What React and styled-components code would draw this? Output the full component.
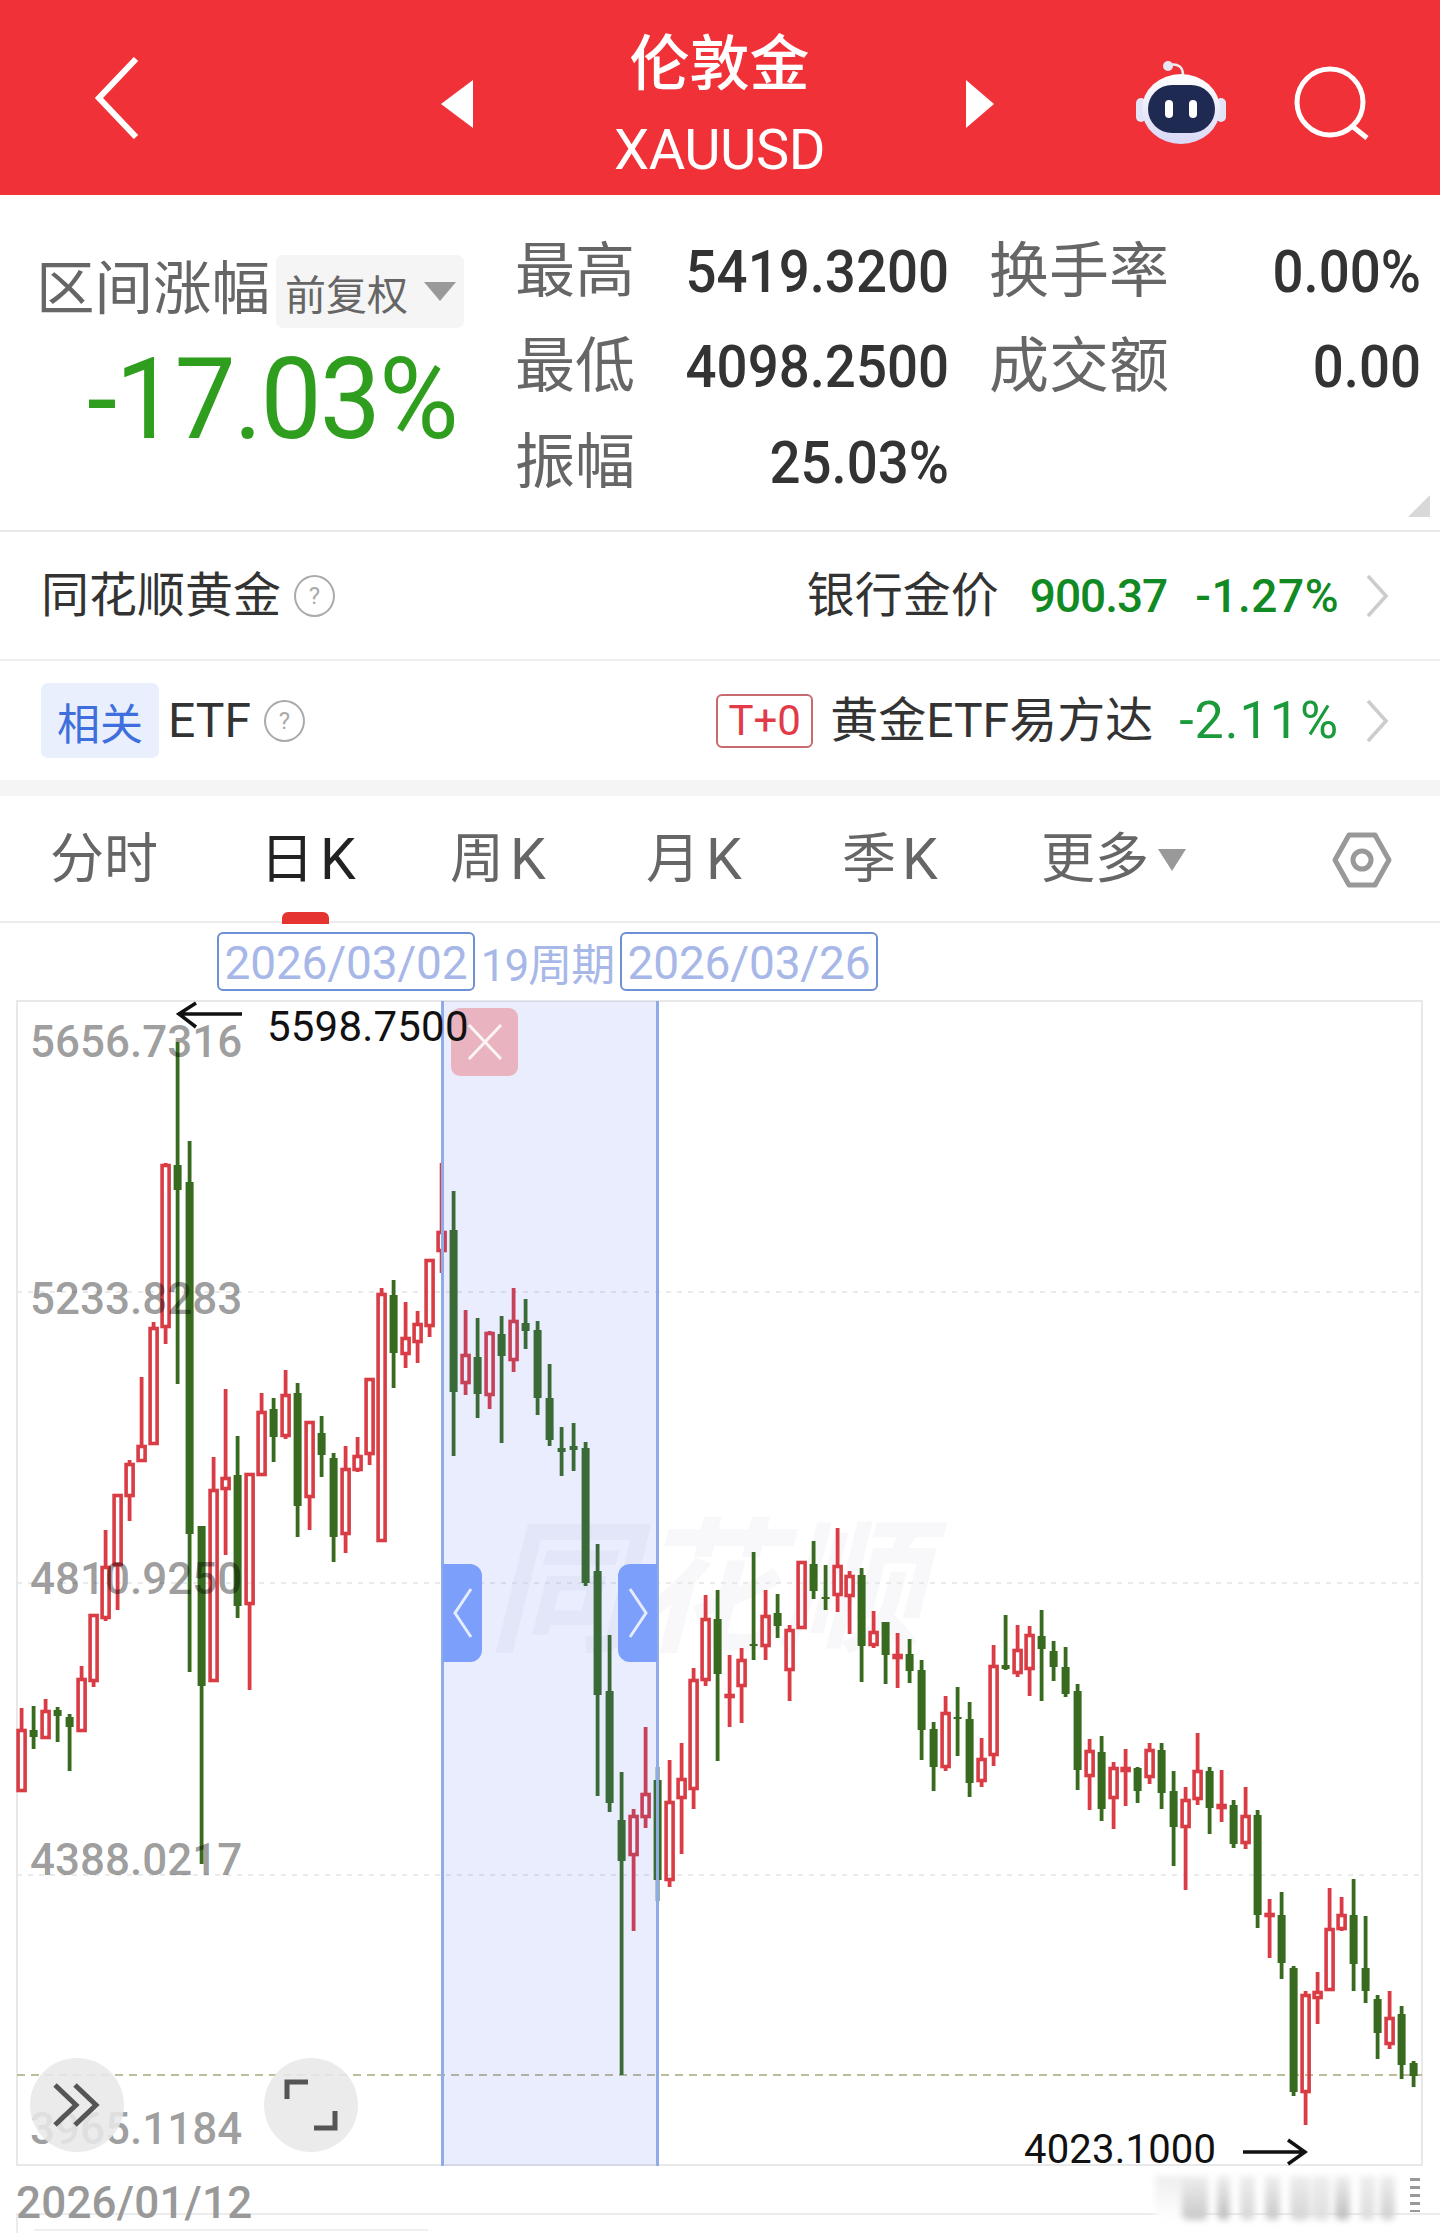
import React from "react";
import styled, { createGlobalStyle } from "styled-components";

const Global = createGlobalStyle`
  html, body { margin: 0; padding: 0; background: #fff; }
  body { font-family: Roboto, "Noto Sans CJK SC", sans-serif; color: #333; }
  * { box-sizing: border-box; }
`;

// [colour, high, body top, body bottom, low] in page pixels
const CANDLES = [
  ["r",1708,1729,1792,1792],["g",1706,1730,1737,1749],["r",1699,1710,1739,1739],["g",1707,1710,1716,1742],
  ["g",1714,1717,1727,1771],["r",1666,1678,1732,1732],["r",1614,1614,1682,1687],["r",1530,1566,1619,1621],
  ["r",1494,1494,1566,1610],["r",1460,1463,1497,1521],["r",1377,1445,1462,1462],["r",1322,1327,1445,1445],
  ["r",1163,1164,1328,1344],["g",1042,1165,1190,1384],["g",1141,1182,1534,1672],["g",1526,1526,1686,1864],
  ["r",1457,1489,1682,1682],["r",1389,1477,1490,1555],["g",1436,1475,1606,1618],["r",1473,1473,1605,1690],
  ["r",1393,1411,1476,1476],["g",1398,1409,1437,1462],["r",1370,1394,1437,1439],["g",1383,1393,1506,1537],
  ["r",1421,1421,1498,1530],["g",1416,1433,1455,1477],["g",1453,1458,1537,1562],["r",1446,1468,1535,1553],
  ["r",1437,1455,1471,1472],["r",1378,1378,1455,1465],["r",1288,1293,1542,1542],["g",1280,1295,1353,1388],
  ["r",1302,1337,1355,1368],["r",1311,1323,1343,1363],["r",1259,1259,1327,1337],["r",1163,1231,1252,1273],
  ["g",1191,1230,1392,1456],["r",1310,1354,1384,1395],["g",1318,1357,1394,1418],["r",1331,1332,1396,1409],
  ["g",1316,1334,1356,1443],["r",1288,1320,1361,1372],["g",1299,1323,1331,1349],["g",1321,1330,1398,1415],
  ["g",1364,1398,1440,1446],["g",1427,1448,1452,1476],["g",1423,1446,1450,1471],["g",1442,1448,1583,1586],
  ["g",1544,1571,1695,1796],["g",1635,1691,1803,1812],["g",1772,1820,1861,2075],["r",1809,1815,1856,1931],
  ["r",1727,1793,1818,1828],["g",1767,1780,1880,1901],["r",1760,1801,1881,1887],["r",1743,1778,1799,1854],
  ["r",1668,1679,1790,1809],["r",1595,1618,1681,1686],["g",1590,1619,1674,1761],["r",1655,1694,1697,1727],
  ["r",1648,1659,1687,1723],["g",1552,1644,1646,1660],["r",1590,1615,1647,1660],["g",1594,1613,1626,1638],
  ["r",1625,1629,1671,1701],["r",1561,1561,1629,1629],["g",1541,1564,1591,1599],["g",1565,1597,1599,1610],
  ["r",1528,1565,1596,1612],["r",1571,1575,1597,1634],["g",1568,1575,1646,1682],["r",1611,1631,1646,1648],
  ["g",1622,1622,1655,1684],["r",1633,1654,1659,1688],["g",1639,1654,1671,1683],["g",1660,1670,1730,1760],
  ["g",1722,1729,1767,1791],["r",1696,1712,1768,1771],["g",1687,1717,1719,1756],["g",1702,1719,1783,1797],
  ["r",1738,1758,1782,1787],["r",1645,1665,1756,1766],["g",1615,1665,1669,1670],["r",1625,1649,1674,1677],
  ["r",1626,1634,1670,1696],["g",1610,1636,1649,1701],["g",1641,1651,1667,1681],["g",1647,1667,1694,1697],
  ["g",1684,1691,1770,1790],["r",1739,1750,1777,1810],["g",1736,1752,1809,1821],["r",1762,1767,1799,1829],
  ["r",1749,1767,1772,1806],["g",1767,1768,1791,1803],["r",1743,1749,1778,1784],["g",1743,1750,1793,1809],
  ["g",1771,1791,1827,1866],["r",1787,1799,1828,1890],["r",1733,1770,1800,1805],["g",1767,1771,1808,1834],
  ["r",1770,1804,1809,1822],["g",1800,1805,1844,1848],["r",1787,1815,1844,1849],["g",1810,1815,1915,1928],
  ["r",1899,1913,1916,1958],["g",1892,1915,1963,1979],["g",1966,1968,2092,2096],["r",1991,1994,2093,2125],
  ["r",1972,1991,1999,2024],["r",1888,1928,1991,1991],["r",1897,1914,1930,1931],["g",1879,1915,1964,1991],
  ["g",1916,1968,1991,2003],["g",1995,1999,2033,2059],["r",1991,2017,2045,2049],["g",2006,2014,2065,2079],
  ["g",2061,2063,2076,2087],
];

const RED = "#d93c45";
const GREEN = "#386a1f";

const Page = styled.div`
  width: 1440px;
  height: 2233px;
  overflow: hidden;
  background: #fff;
`;

/* header */
const Header = styled.header`
  height: 195px;
  background: #f03238;
  color: #fff;
  display: grid;
  grid-template-columns: 441px 32px 493px 28px 1fr;
  align-items: center;
`;
const BackWrap = styled.div`
  padding-left: 95px;
  display: flex;
`;
const TitleBlock = styled.div`
  display: flex;
  flex-direction: column;
  align-items: center;
  align-self: start;
  padding-top: 33px;
`;
const Title = styled.div`
  font-size: 60px;
  line-height: 64px;
  font-weight: 500;
`;
const Code = styled.div`
  font-size: 56px;
  line-height: 56px;
  margin-top: 25px;
  letter-spacing: -0.5px;
`;
const Arrow = styled.div`
  width: 0;
  height: 0;
  border-top: 24px solid transparent;
  border-bottom: 24px solid transparent;
  ${(p) => (p.$left ? "border-right: 32px solid #fff;" : "border-left: 28px solid #fff;")}
  margin-top: 12px;
`;
const HeaderRight = styled.div`
  display: flex;
  align-items: center;
  padding-left: 142px;
  gap: 68px;
  margin-top: 10px;
`;

/* summary */
const Summary = styled.section`
  position: relative;
  height: 337px;
  display: flex;
  border-bottom: 2px solid #e9e9e9;
`;
const SummaryLeft = styled.div`
  width: 515px;
  padding: 58px 0 0 36px;
`;
const RangeRow = styled.div`
  display: flex;
  align-items: center;
  gap: 6px;
`;
const RangeLabel = styled.div`
  font-size: 58.5px;
  line-height: 72px;
  color: #666;
  margin-bottom: 5px;
`;
const AdjustPill = styled.div`
  width: 188px;
  height: 73px;
  border-radius: 7px;
  background: #f5f5f5;
  display: flex;
  align-items: center;
  padding-left: 9px;
  gap: 16px;
  font-size: 41px;
  color: #666;
`;
const TriDown = styled.div`
  width: 0;
  height: 0;
  border-left: ${(p) => p.$w / 2}px solid transparent;
  border-right: ${(p) => p.$w / 2}px solid transparent;
  border-top: ${(p) => p.$h}px solid #999;
`;
const RangeValue = styled.div`
  font-size: 114px;
  line-height: 114px;
  margin: 12px 0 0 51px;
  color: #2f9e1e;
  letter-spacing: -2px;
  transform: scaleX(0.955);
  transform-origin: left;
  white-space: nowrap;
`;
const StatsGrid = styled.div`
  display: grid;
  grid-template-columns: 115px 319px 214px 258px;
  grid-auto-rows: 95.5px;
  padding-top: 29px;
  align-items: center;
`;
const StatLabel = styled.div`
  font-size: 60px;
  line-height: 66px;
  color: #666;
  white-space: nowrap;
  ${(p) => p.$second && "margin-left: 40px;"}
`;
const StatValue = styled.div`
  text-align: right;
  font-size: 60px;
  line-height: 66px;
  font-weight: 500;
  color: #333;
  transform: scaleX(0.91);
  transform-origin: right;
  white-space: nowrap;
`;
const CornerMark = styled.div`
  position: absolute;
  right: 10px;
  bottom: 13px;
  width: 0;
  height: 0;
  border-left: 22px solid transparent;
  border-bottom: 22px solid #d8d8d8;
`;

/* list rows */
const ListRow = styled.div`
  height: ${(p) => p.$h}px;
  display: flex;
  align-items: center;
  justify-content: space-between;
  padding: 0 52px 0 ${(p) => p.$pl}px;
  border-bottom: ${(p) => (p.$line ? "2px solid #efefef" : "none")};
`;
const RowSide = styled.div`
  display: flex;
  align-items: center;
`;
const RowText = styled.div`
  font-size: 48px;
  line-height: 60px;
  color: #333;
  white-space: nowrap;
  margin: ${(p) => p.$m || "0"};
`;
const Help = styled.div`
  width: 41px;
  height: 42px;
  border-radius: 50%;
  border: 2px solid #aaa;
  color: #aaa;
  font-size: 24px;
  display: flex;
  align-items: center;
  justify-content: center;
  margin-left: 13px;
`;
const Quote = styled.div`
  font-size: ${(p) => p.$size || 46}px;
  font-weight: ${(p) => p.$weight || 500};
  line-height: 60px;
  color: ${(p) => p.$color || "#118a24"};
  margin-left: ${(p) => p.$ml}px;
  letter-spacing: ${(p) => p.$ls || 0}px;
  white-space: nowrap;
`;
const Related = styled.div`
  width: 118px;
  height: 75px;
  border-radius: 7px;
  background: #e9effd;
  color: #3f6fdc;
  font-size: 43px;
  display: flex;
  align-items: center;
  justify-content: center;
`;
const TagBox = styled.div`
  width: 97px;
  height: 54px;
  border: 2px solid #c96a6e;
  border-radius: 6px;
  color: #e23a46;
  font-size: 42px;
  display: flex;
  align-items: center;
  justify-content: center;
`;
const ChevronWrap = styled.div`
  display: flex;
  margin-left: 27px;
`;
const GreyBand = styled.div`
  height: 16px;
  background: #f5f5f5;
`;

/* period tabs */
const Tabs = styled.nav`
  height: 127px;
  display: grid;
  grid-template-columns: 210px 190px 196px 196px 199px 150px 1fr;
  align-items: center;
  padding: 2px 48px 0 50px;
  border-bottom: 2px solid #ececec;
`;
const Tab = styled.div`
  position: relative;
  height: 64px;
  font-size: 54px;
  line-height: 64px;
  color: ${(p) => (p.$active ? "#222" : "#666")};
  display: flex;
  align-items: center;
  white-space: nowrap;
  ${(p) =>
    p.$active &&
    `&::after {
      content: "";
      position: absolute;
      left: 22px;
      bottom: -32px;
      width: 47px;
      height: 12px;
      border-radius: 6px 6px 0 0;
      background: #e5332f;
    }`}
`;
const KLetter = styled.span`
  font-size: 57px;
  margin-left: 6px;
`;
const MoreTri = styled.span`
  display: block;
  margin-left: 9px;
  width: 0;
  height: 0;
  border-left: 14px solid transparent;
  border-right: 14px solid transparent;
  border-top: 22px solid #999;
`;
const SettingsWrap = styled.div`
  justify-self: end;
  display: flex;
`;

/* selected range row */
const RangeBar = styled.div`
  height: 77px;
  display: flex;
  align-items: center;
  padding-left: 217px;
  color: #a7b8e8;
  font-size: 46px;
`;
const DateBox = styled.div`
  width: 258px;
  height: 59px;
  border: 2px solid #6d90d2;
  border-radius: 6px;
  display: flex;
  align-items: center;
  justify-content: center;
  padding-top: 2px;
  letter-spacing: -0.2px;
`;
const Periods = styled.div`
  width: 145px;
  text-align: center;
  white-space: nowrap;
  font-size: 44px;
  letter-spacing: -1px;
`;

/* chart */
const Chart = styled.div`
  position: relative;
  width: 1407px;
  height: 1166px;
  margin-left: 16px;
`;
const Watermark = styled.div`
  position: absolute;
  left: 472px;
  top: 510px;
  font-size: 145px;
  line-height: 160px;
  font-weight: 700;
  font-style: italic;
  color: #f8f8fa;
  white-space: nowrap;
`;
const ChartSvg = styled.svg`
  position: absolute;
  inset: 0;
`;
const PriceLabel = styled.div`
  position: absolute;
  left: 14px;
  top: ${(p) => p.$top}px;
  font-size: 44px;
  line-height: 44px;
  font-weight: 500;
  color: rgba(0, 0, 0, 0.4);
`;
const Mark = styled.div`
  position: absolute;
  left: ${(p) => p.$left}px;
  top: ${(p) => p.$top}px;
  font-size: ${(p) => p.$size}px;
  line-height: 40px;
  color: #111;
  letter-spacing: 0.2px;
`;
const MarkArrow = styled.svg`
  position: absolute;
  left: ${(p) => p.$left}px;
  top: ${(p) => p.$top}px;
`;
const Band = styled.div`
  position: absolute;
  left: 425px;
  top: 1px;
  width: 218px;
  height: 1165px;
  background: rgba(70, 110, 240, 0.12);
  border-left: 3px solid #8fabe8;
  border-right: 3px solid #8fabe8;
`;
const Close = styled.div`
  position: absolute;
  left: 7px;
  top: 7px;
  width: 67px;
  height: 68px;
  border-radius: 9px;
  background: #e9b4bf;
  display: flex;
  align-items: center;
  justify-content: center;
`;
const Handle = styled.div`
  position: absolute;
  top: 563px;
  ${(p) => (p.$right ? "right: -1px;" : "left: -1px;")}
  width: 39px;
  height: 98px;
  background: #7b9ffb;
  border-radius: ${(p) => (p.$right ? "12px 0 0 12px" : "0 12px 12px 0")};
  display: flex;
  align-items: center;
  justify-content: center;
`;
const RoundButton = styled.div`
  position: absolute;
  left: ${(p) => p.$left}px;
  top: 1058px;
  width: 94px;
  height: 94px;
  border-radius: 50%;
  background: rgba(232, 232, 232, 0.88);
  display: flex;
  align-items: center;
  justify-content: center;
`;

/* footer strip */
const AxisRow = styled.div`
  height: 49px;
  margin-left: 16px;
  border-bottom: 2px solid #ececec;
  font-size: 44px;
  line-height: 46px;
  font-weight: 500;
  color: #999;
  position: relative;
`;
const StartDate = styled.div`
  position: absolute;
  top: 14px;
  left: 0;
  letter-spacing: 0.2px;
`;
const Blurred = styled.div`
  position: absolute;
  left: 1139px;
  top: 10px;
  display: flex;
  filter: blur(3px);
`;
const BlurBar = styled.div`
  width: ${(p) => p.$w}px;
  height: 44px;
  margin-right: ${(p) => p.$gap}px;
  background: linear-gradient(180deg, #eee, ${(p) => p.$c});
  border-radius: 0 0 6px 6px;
`;
const TinyStack = styled.div`
  position: absolute;
  left: 1394px;
  top: 12px;
  width: 10px;
  height: 34px;
  background: repeating-linear-gradient(180deg, #999 0 3px, transparent 3px 8px);
`;
const Tail = styled.div`
  margin: 0 0 0 16px;
  height: 18px;
  border-left: 2px solid #ececec;
  padding: 14px 0 0 16px;
`;
const TailLine = styled.div`
  width: 394px;
  height: 2px;
  background: #efefef;
`;

const Candle = ({ c, i }) => {
  const [kind, high, top, bot, low] = c;
  const x = 21.6 + i * 12;
  const col = kind === "r" ? RED : GREEN;
  return (
    <g>
      <line x1={x} x2={x} y1={high} y2={top} stroke={col} strokeWidth="3.8" />
      <line x1={x} x2={x} y1={bot} y2={low} stroke={col} strokeWidth="3.8" />
      {kind === "r" ? (
        <rect x={x - 3.5} y={top + 1.5} width="7" height={Math.max(bot - top - 3, 1)} fill="none" stroke={col} strokeWidth="3.6" />
      ) : (
        <rect x={x - 4} y={top} width="8" height={Math.max(bot - top, 2)} fill={col} />
      )}
    </g>
  );
};

const Chevron = () => (
  <svg width="22" height="44" viewBox="0 0 22 44">
    <path d="M2 2 L20 22 L2 42" fill="none" stroke="#ccc" strokeWidth="3.5" />
  </svg>
);

const Robot = () => (
  <svg width="90" height="83" viewBox="0 0 90 83">
    <defs>
      <linearGradient id="shell" x1="0" y1="0" x2="0" y2="1">
        <stop offset="0" stopColor="#ffffff" />
        <stop offset="1" stopColor="#d9d8f6" />
      </linearGradient>
    </defs>
    <path d="M33 4 C42 2 47 6 47 14" fill="none" stroke="#eee" strokeWidth="2.5" />
    <circle cx="32" cy="5" r="5" fill="#e6e6f5" />
    <rect x="0" y="37" width="10" height="24" rx="5" fill="#e3e3f7" />
    <rect x="80" y="37" width="10" height="24" rx="5" fill="#e3e3f7" />
    <ellipse cx="45" cy="48" rx="39" ry="35" fill="url(#shell)" />
    <rect x="12" y="24" width="67" height="48" rx="24" fill="#1e2a52" />
    <rect x="29" y="39" width="8" height="18" rx="4" fill="#fff" />
    <rect x="53" y="39" width="8" height="18" rx="4" fill="#fff" />
  </svg>
);

const App = () => (
  <Page>
    <Global />
    <Header>
      <BackWrap>
        <svg width="44" height="82" viewBox="0 0 44 82">
          <path d="M41 2 L4 41 L41 80" fill="none" stroke="#fff" strokeWidth="6" />
        </svg>
      </BackWrap>
      <Arrow $left />
      <TitleBlock>
        <Title>伦敦金</Title>
        <Code>XAUUSD</Code>
      </TitleBlock>
      <Arrow />
      <HeaderRight>
        <Robot />
        <svg width="76" height="74" viewBox="0 0 76 74">
          <circle cx="36" cy="36" r="33" fill="none" stroke="#fff" strokeWidth="5" />
          <path d="M58 60 L73 72" fill="none" stroke="#fff" strokeWidth="5" />
        </svg>
      </HeaderRight>
    </Header>

    <Summary>
      <SummaryLeft>
        <RangeRow>
          <RangeLabel>区间涨幅</RangeLabel>
          <AdjustPill>
            前复权
            <TriDown $w={32} $h={19} />
          </AdjustPill>
        </RangeRow>
        <RangeValue>-17.03%</RangeValue>
      </SummaryLeft>
      <StatsGrid>
        <StatLabel>最高</StatLabel>
        <StatValue>5419.3200</StatValue>
        <StatLabel $second>换手率</StatLabel>
        <StatValue>0.00%</StatValue>
        <StatLabel>最低</StatLabel>
        <StatValue>4098.2500</StatValue>
        <StatLabel $second>成交额</StatLabel>
        <StatValue>0.00</StatValue>
        <StatLabel>振幅</StatLabel>
        <StatValue>25.03%</StatValue>
      </StatsGrid>
      <CornerMark />
    </Summary>

    <ListRow $h={129} $pl={41} $line>
      <RowSide>
        <RowText>同花顺黄金</RowText>
        <Help>?</Help>
      </RowSide>
      <RowSide>
        <RowText>银行金价</RowText>
        <Quote $ml={31} $ls={-1}>900.37</Quote>
        <Quote $ml={28} $ls={0.5}>-1.27%</Quote>
        <ChevronWrap>
          <Chevron />
        </ChevronWrap>
      </RowSide>
    </ListRow>
    <ListRow $h={119} $pl={41}>
      <RowSide>
        <Related>相关</Related>
        <RowText $m="0 0 0 9px">ETF</RowText>
        <Help>?</Help>
      </RowSide>
      <RowSide>
        <TagBox>T+0</TagBox>
        <RowText $m="0 0 0 17px">黄金ETF易方达</RowText>
        <Quote $ml={26} $size={52} $weight={400} $color="#1a9a3a" $ls={1}>-2.11%</Quote>
        <ChevronWrap>
          <Chevron />
        </ChevronWrap>
      </RowSide>
    </ListRow>
    <GreyBand />

    <Tabs>
      <Tab>分时</Tab>
      <Tab $active>日<KLetter>K</KLetter></Tab>
      <Tab>周<KLetter>K</KLetter></Tab>
      <Tab>月<KLetter>K</KLetter></Tab>
      <Tab>季<KLetter>K</KLetter></Tab>
      <Tab>
        更多
        <MoreTri />
      </Tab>
      <SettingsWrap>
        <svg width="60" height="56" viewBox="0 0 60 56">
          <path d="M17 3 H43 L57 28 L43 53 H17 L3 28 Z" fill="none" stroke="#999" strokeWidth="5" strokeLinejoin="round" />
          <circle cx="30" cy="28" r="9" fill="none" stroke="#999" strokeWidth="5" />
        </svg>
      </SettingsWrap>
    </Tabs>

    <RangeBar>
      <DateBox>2026/03/02</DateBox>
      <Periods>19周期</Periods>
      <DateBox>2026/03/26</DateBox>
    </RangeBar>

    <Chart>
      <Watermark>同花顺</Watermark>
      <ChartSvg width="1407" height="1166" viewBox="16 1000 1407 1166">
        <rect x="17" y="1001" width="1405" height="1164" fill="none" stroke="#e8e8e8" strokeWidth="2" />
        {[1292, 1583, 1875].map((y) => (
          <line key={y} x1="17" x2="1422" y1={y} y2={y} stroke="#e4e4e4" strokeWidth="1.5" strokeDasharray="5 6" />
        ))}
        <line x1="17" x2="1422" y1="2075" y2="2075" stroke="#a8a878" strokeWidth="1.5" strokeDasharray="8 6" />
        {CANDLES.map((c, i) => (
          <Candle key={i} c={c} i={i} />
        ))}
      </ChartSvg>
      <Band>
        <Close>
          <svg width="36" height="38" viewBox="0 0 36 38">
            <path d="M2 2 L34 36 M34 2 L2 36" fill="none" stroke="#fff" strokeWidth="3" opacity="0.85" />
          </svg>
        </Close>
        <Handle>
          <svg width="24" height="54" viewBox="0 0 24 54">
            <path d="M20 3 L4 27 L20 51" fill="none" stroke="#fff" strokeWidth="3" opacity="0.8" />
          </svg>
        </Handle>
        <Handle $right>
          <svg width="24" height="54" viewBox="0 0 24 54">
            <path d="M4 3 L20 27 L4 51" fill="none" stroke="#fff" strokeWidth="3" opacity="0.8" />
          </svg>
        </Handle>
      </Band>
      <PriceLabel $top={20}>5656.7316</PriceLabel>
      <PriceLabel $top={277}>5233.8283</PriceLabel>
      <PriceLabel $top={557}>4810.9250</PriceLabel>
      <PriceLabel $top={838}>4388.0217</PriceLabel>
      <PriceLabel $top={1107}>3965.1184</PriceLabel>
      <MarkArrow $left={160} $top={1} width="68" height="28" viewBox="0 0 68 28">
        <path d="M66 13 H3 M20 2 L3 13 L20 26" fill="none" stroke="#111" strokeWidth="3.5" />
      </MarkArrow>
      <Mark $left={251} $top={7} $size={42}>5598.7500</Mark>
      <Mark $left={1008} $top={1130} $size={40}>4023.1000</Mark>
      <MarkArrow $left={1226} $top={1138} width="66" height="28" viewBox="0 0 66 28">
        <path d="M1 14 H63 M46 2 L63 14 L46 26" fill="none" stroke="#111" strokeWidth="3.5" />
      </MarkArrow>
      <RoundButton $left={14}>
        <svg width="50" height="46" viewBox="0 0 50 46">
          <path d="M3 3 L24 23 L3 43 M23 3 L44 23 L23 43" fill="none" stroke="#555" strokeWidth="5" />
        </svg>
      </RoundButton>
      <RoundButton $left={248}>
        <svg width="54" height="52" viewBox="0 0 54 52">
          <path d="M3 20 V3 H24 M51 32 V49 H30" fill="none" stroke="#555" strokeWidth="5" />
        </svg>
      </RoundButton>
    </Chart>

    <AxisRow>
      <StartDate>2026/01/12</StartDate>
      <Blurred>
        <BlurBar $w={27} $gap={0} $c="#ffffff" />
        <BlurBar $w={26} $gap={9} $c="#c8c8c8" />
        <BlurBar $w={13} $gap={10} $c="#bdbdbd" />
        <BlurBar $w={15} $gap={10} $c="#d6d6d6" />
        <BlurBar $w={15} $gap={10} $c="#c8c8c8" />
        <BlurBar $w={20} $gap={2} $c="#d4d4d4" />
        <BlurBar $w={18} $gap={5} $c="#dedede" />
        <BlurBar $w={15} $gap={10} $c="#bdbdbd" />
        <BlurBar $w={15} $gap={5} $c="#dcdcdc" />
        <BlurBar $w={15} $gap={6} $c="#cfcfcf" />
      </Blurred>
      <TinyStack />
    </AxisRow>
    <Tail>
      <TailLine />
    </Tail>
  </Page>
);

export default App;
